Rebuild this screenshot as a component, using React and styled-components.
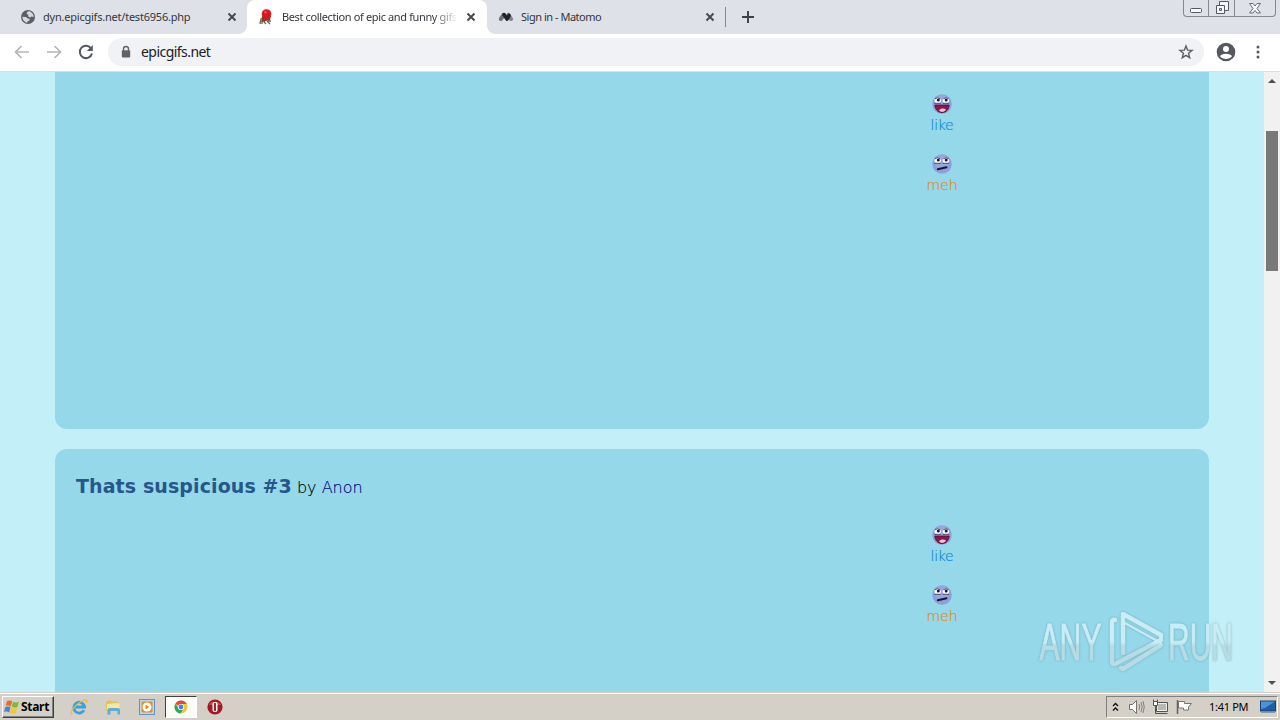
import React from 'react';
import styled, { createGlobalStyle } from 'styled-components';

const GlobalStyle = createGlobalStyle`
  * {
    box-sizing: border-box;
  }

  body {
    margin: 0;
    overflow: hidden;
    font-family: 'Noto Sans', 'Open Sans', sans-serif;
  }

  svg {
    display: block;
    flex: none;
  }
`;

const Screen = styled.div`
  position: relative;
  display: flex;
  flex-direction: column;
  width: 1280px;
  height: 720px;
  overflow: hidden;
  background: #fff;
`;

const TabStrip = styled.div`
  display: flex;
  height: 34px;
  background: #dee1e8;
`;

const Tab = styled.div`
  position: relative;
  display: flex;
  align-items: center;
  width: ${({ width }) => width}px;
  height: 34px;
  padding: 0 ${({ end }) => end || 9}px 0 ${({ inset }) => inset}px;
  border-radius: 8px 8px 0 0;
  background: ${({ active }) => (active ? '#fff' : 'transparent')};

  ${({ active }) =>
    active &&
    `&::before,
  &::after {
    content: '';
    position: absolute;
    bottom: 0;
    width: 8px;
    height: 8px;
  }
  &::before {
    left: -8px;
    background: radial-gradient(circle at 0 0, transparent 7.5px, #fff 8px);
  }
  &::after {
    right: -8px;
    background: radial-gradient(circle at 100% 0, transparent 7.5px, #fff 8px);
  }`}
`;

const TabTitle = styled.span`
  flex: 1;
  margin: 0 6px 0 ${({ gap }) => gap || 7}px;
  overflow: hidden;
  white-space: nowrap;
  color: #34373b;
  font-size: 11px;
  line-height: 16px;
  letter-spacing: ${({ spacing }) => spacing || 0}px;
  ${({ fade }) =>
    fade && 'mask-image: linear-gradient(90deg, #000 86%, transparent);'}
`;

const NewTab = styled.div`
  display: flex;
  align-items: center;
  gap: 15px;
  height: 34px;
  margin-left: -1px;
`;

const Divider = styled.span`
  width: 1px;
  height: 20px;
  background: #85888d;
`;

const WindowButtons = styled.div`
  display: flex;
  height: 17px;
  margin: 0 4px 0 auto;
  border: 1px solid #84888f;
  border-top: 0;
  border-radius: 0 0 4px 4px;
`;

const WindowButton = styled.span`
  display: flex;
  align-items: center;
  justify-content: center;
  width: ${({ width }) => width}px;

  & + & {
    border-left: 1px solid #84888f;
  }
`;

const Toolbar = styled.div`
  display: flex;
  align-items: center;
  height: 38px;
  padding: 0 13px 1px;
  border-bottom: 1px solid #dcdfe3;
  background: #fff;
`;

const NavButtons = styled.div`
  display: flex;
  gap: 14px;
`;

const AddressBar = styled.div`
  display: flex;
  align-items: center;
  width: 1096px;
  height: 28px;
  margin: 0 12px 0 13px;
  padding: 0 9px 0 11px;
  border-radius: 14px;
  background: #f0f2f5;
`;

const Url = styled.span`
  flex: 1;
  margin-left: 8px;
  color: #202124;
  font-size: 14px;
  line-height: 20px;
  letter-spacing: -0.55px;
`;

const ToolbarActions = styled.div`
  display: flex;
  align-items: center;
  gap: 20px;
`;

const Viewport = styled.div`
  display: flex;
  height: 620px;
  overflow: hidden;
`;

const Page = styled.main`
  display: flex;
  flex-direction: column;
  gap: 20px;
  width: 1264px;
  height: 620px;
  padding: 0 55px;
  overflow: hidden;
  background: #c3eff8;
`;

const Post = styled.article`
  flex: none;
  height: 411px;
  padding: 24px 21px 0;
  border-radius: 12px;
  background: #94d8ea;
  font-family: 'DejaVu Sans', Verdana, sans-serif;

  &:first-child {
    margin-top: -54px;
  }
`;

const PostHeader = styled.header`
  display: flex;
  align-items: baseline;
  height: 52px;
  white-space: nowrap;
`;

const PostTitle = styled.h2`
  margin: 0 5px 0 0;
  color: #27568a;
  font-family: 'DejaVu Sans', Verdana, sans-serif;
  font-size: 19px;
  line-height: 26px;
  letter-spacing: 0.1px;
`;

const Byline = styled.span`
  color: #000;
  font-family: 'DejaVu Sans Light', 'DejaVu Sans', sans-serif;
  font-weight: 200;
  font-size: 16px;
  -webkit-text-stroke: 0.15px;
`;

const Author = styled.span`
  color: #000b80;
`;

const Votes = styled.div`
  display: flex;
  flex-direction: column;
  align-items: center;
  gap: 20px;
  width: 60px;
  margin-left: 836px;
`;

const Vote = styled.div`
  display: flex;
  flex-direction: column;
  align-items: center;
  height: 40px;
  color: ${({ color }) => color};
  font-size: 14px;
  line-height: 23px;
  font-family: 'DejaVu Sans Light', 'DejaVu Sans', sans-serif;
  letter-spacing: ${({ spacing }) => spacing || 0}px;
  -webkit-text-stroke: 0.2px;
`;

const Scrollbar = styled.div`
  display: flex;
  flex-direction: column;
  align-items: center;
  width: 16px;
  padding: 7px 0;
  background: #f1f1f1;
`;

const Thumb = styled.div`
  width: 12px;
  height: 140px;
  margin: 48px 0 auto;
  background: #787878;
`;

const Arrow = styled.span`
  border: 4px solid transparent;
  ${({ up }) =>
    up
      ? 'border-top: 0; border-bottom: 4px solid #505050;'
      : 'border-bottom: 0; border-top: 4px solid #505050;'}
`;

const Taskbar = styled.footer`
  display: flex;
  align-items: center;
  height: 28px;
  padding: 3px 2px 2px;
  border-top: 1px solid #d4d0c8;
  box-shadow: inset 0 1px #fff;
  background: #d4cfc7;
`;

const StartButton = styled.div`
  display: flex;
  align-items: center;
  gap: 1px;
  width: 52px;
  height: 22px;
  padding-left: 1px;
  border: 1px solid;
  border-color: #fff #404040 #404040 #fff;
  box-shadow: inset -1px -1px #808080;
  color: #000;
  font-size: 12px;
  font-weight: 700;
  line-height: 16px;
  letter-spacing: -0.3px;
`;

const Launchers = styled.div`
  display: flex;
  align-items: center;
  margin-left: 8px;
`;

const Launcher = styled.div`
  display: flex;
  align-items: center;
  justify-content: center;
  width: 34px;
  height: 22px;
  ${({ pressed }) =>
    pressed &&
    `width: 32px;
  margin: 0 1px;
  border: 1px solid;
  border-color: #404040 #fff #fff #404040;
  background: #fbfbfa;`}
`;

const Tray = styled.div`
  display: flex;
  align-items: center;
  width: 172px;
  height: 22px;
  margin-left: auto;
  padding-left: 5px;
  border: 1px solid;
  border-color: #808080 #fff #fff #808080;
`;

const Clock = styled.span`
  width: 42px;
  margin: 0 9px 0 16px;
  color: #000;
  font-size: 11px;
  line-height: 16px;
  white-space: nowrap;
  letter-spacing: -0.3px;
`;

const TrayIcons = styled.div`
  display: flex;
  align-items: center;
  gap: 7px;
`;

const Watermark = styled.svg`
  position: absolute;
  left: 1030px;
  top: 602px;
  filter: drop-shadow(0 0 1px rgba(80, 120, 135, 0.5));
`;

function CloseIcon() {
  return (
    <svg width="14" height="14" viewBox="0 0 14 14">
      <path d="M3.5 3.5l7 7m0-7l-7 7" stroke="#45484c" strokeWidth="1.9" />
    </svg>
  );
}

function GlobeIcon() {
  return (
    <svg width="14" height="14" viewBox="0 0 14 14">
      <circle cx="7" cy="7" r="7" fill="#5b5f65" />
      <path d="M6.500 1.500L9 1.300l3 2.700.8 3-2.300-.4-1.500.8-2-1.200.5-1.500-2-.8z" fill="#d5d8de" />
      <path d="M1.200 6.800l3.500.2 2.300 1.400 1.800.5-.6 1.800-1.700.7-.4 1.400-2-.8L2 9.800z" fill="#d5d8de" />
    </svg>
  );
}

function SquidIcon() {
  return (
    <svg width="14" height="17" viewBox="0 0 14 17">
      <path
        d="M5 8L2 10l-1 5m5-6l-3 3v3m4-5l-2 3 2 2m1-6l2 3 2 0m-4 0l3 3"
        fill="none"
        stroke="#5c6b57"
        strokeWidth="1.3"
      />
      <path d="M3 7l4 1 5-1-1 4-4 1-4 1z" fill="#8c3a35" />
      <circle cx="7.500" cy="5" r="4.800" fill="#dc1719" />
      <circle cx="6.500" cy="3.300" r="1.200" fill="#ee5a5b" />
    </svg>
  );
}

function MatomoIcon() {
  return (
    <svg width="16" height="10" viewBox="0 0 16 10">
      <path d="M2.800 7l2.800-4" stroke="#6f7378" strokeWidth="4" strokeLinecap="round" />
      <path d="M10.500 2.800l2.500 4.200" stroke="#808489" strokeWidth="4" strokeLinecap="round" />
      <path
        d="M6 2.600l3 4.400 2-3.500"
        fill="none"
        stroke="#202226"
        strokeWidth="3.600"
        strokeLinejoin="round"
        strokeLinecap="round"
      />
    </svg>
  );
}

function NavArrow({ forward }) {
  return (
    <svg width="18" height="18" viewBox="0 0 18 18">
      <path
        d={forward ? 'M2 9h13M9.500 3l6 6-6 6' : 'M16 9H3M8.500 3l-6 6 6 6'}
        fill="none"
        stroke="#b3b5b8"
        strokeWidth="1.700"
      />
    </svg>
  );
}

function ReloadIcon() {
  return (
    <svg width="18" height="18" viewBox="0 0 18 18">
      <path d="M14.200 5.500A6.200 6.200 0 1 0 15 10.500" fill="none" stroke="#55585d" strokeWidth="2" />
      <path d="M15.800 2v6h-6z" fill="#55585d" />
    </svg>
  );
}

function LockIcon() {
  return (
    <svg width="14" height="14" viewBox="0 0 14 14">
      <path d="M4.500 6V4a2.500 2.500 0 0 1 5 0v2" fill="none" stroke="#5f6368" strokeWidth="1.400" />
      <rect x="2.800" y="5.300" width="8.400" height="7.200" rx="1" fill="#5f6368" />
    </svg>
  );
}

function StarIcon() {
  return (
    <svg width="18" height="18" viewBox="0 0 18 18">
      <path
        d="M9 3l1.600 4.100 4.500.3-3.500 2.900 1.100 4.400L9 12.300 5.300 14.700l1.100-4.400-3.500-2.900 4.500-.3z"
        fill="none"
        stroke="#5a5d62"
        strokeWidth="1.400"
      />
    </svg>
  );
}

function ProfileIcon() {
  return (
    <svg width="20" height="20" viewBox="0 0 20 20">
      <circle cx="10" cy="10" r="9.300" fill="#55585e" />
      <circle cx="10" cy="7" r="3" fill="#fff" />
      <path d="M4 14.200c1.200-3.400 10.800-3.400 12 0-2.800 3.700-9.200 3.700-12 0z" fill="#fff" />
    </svg>
  );
}

function MenuIcon() {
  return (
    <svg width="4" height="16" viewBox="0 0 4 16">
      <circle cx="2" cy="3" r="1.500" fill="#55585e" />
      <circle cx="2" cy="8" r="1.500" fill="#55585e" />
      <circle cx="2" cy="13" r="1.500" fill="#55585e" />
    </svg>
  );
}

function FaceIcon({ happy }) {
  return (
    <svg width="20" height="20" viewBox="0 0 20 20">
      <circle cx="10" cy="10" r="9.800" fill="#8f9fdb" />
      <circle cx="10" cy="8" r="7" fill="#9dabe1" opacity=".6" />
      <ellipse cx="5.700" cy="6.600" rx="3.200" ry="3.100" fill="#fff" />
      <ellipse cx="13.900" cy="6.600" rx="3.200" ry="3.100" fill="#fff" />
      <path
        d="M2.500 9.300h6.200m2.200 0h6.200M3 4.800Q5.500 2.600 8.300 4.800m3 0q3-2.200 5.300 0"
        fill="none"
        stroke="#34375a"
        strokeWidth=".9"
      />
      <circle cx="6.300" cy="6" r="1.500" fill="#171a2c" />
      <circle cx="14.200" cy="6" r="1.500" fill="#171a2c" />
      {happy ? (
        <>
          <path
            d="M2.800 11h14.400c-.5 4.600-3.200 7.600-7.200 7.600S3.300 15.600 2.800 11z"
            fill="#8c1746"
            stroke="#42102e"
            strokeWidth=".8"
          />
          <path d="M7 16.200c2-2.400 5-2.200 7-.6-1.400 2.600-5.200 3.300-7 .6z" fill="#f3c2d3" />
        </>
      ) : (
        <path d="M5.800 15.300l8.700-2.100" stroke="#171a2c" strokeWidth="2" strokeLinecap="round" />
      )}
    </svg>
  );
}

function WindowsLogo() {
  return (
    <svg width="16" height="16" viewBox="0 0 16 16">
      <path d="M3 2c2-1 3.500-.7 5.200.3L6.800 7.500C5.200 6.500 3.500 6.300 1.600 7z" fill="#ee6a2b" />
      <path d="M9 2.800c2 1 3.800 1 6 0L13.500 8c-2 .9-3.800.8-5.800-.2z" fill="#7cb93c" />
      <path d="M1.300 8c2-1 3.600-.7 5.200.3L5.200 13.500C3.500 12.500 2 12.300 0 13z" fill="#3f86d5" />
      <path d="M7.300 8.800c2 1 3.900 1 5.900.1L11.800 14c-2 1-3.900.8-5.900-.2z" fill="#f6c72c" />
    </svg>
  );
}

function ExplorerIcon() {
  return (
    <svg width="18" height="18" viewBox="0 0 18 18">
      <path d="M14 12.200A5.400 5.400 0 1 1 14.600 9H5" fill="none" stroke="#3aa0dc" strokeWidth="2.800" />
      <path d="M2 16.500C-1 14.500 5 7 11.500 3.200 15 1.300 17.700 1.400 16.500 5" fill="none" stroke="#e9bd3a" strokeWidth="1.300" />
    </svg>
  );
}

function FolderIcon() {
  return (
    <svg width="18" height="18" viewBox="0 0 18 18">
      <path d="M2 3.500L6 2l2 1.500 5-.5 2 2v8H2z" fill="#e3c15c" />
      <path d="M3 6l11-1 1.500 1v6H3z" fill="#f7e7a3" />
      <path d="M3.500 16.500V12q0-2 2-2H14q2 0 2 2v4.500h-2.500v-3.500h-7v3.500z" fill="#5baed6" />
    </svg>
  );
}

function PlayerIcon() {
  return (
    <svg width="16" height="16" viewBox="0 0 16 16">
      <rect x=".5" y=".5" width="15" height="15" fill="#b7d9ef" stroke="#5b96c9" />
      <rect x="2.500" y="2.500" width="11" height="11" rx="1" fill="#f08a1d" />
      <circle cx="8" cy="8" r="4.500" fill="#fff" />
      <path d="M6.500 5.500l4 2.500-4 2.500z" fill="#f08a1d" />
    </svg>
  );
}

function ChromeIcon() {
  return (
    <svg width="14" height="14" viewBox="0 0 14 14">
      <circle cx="7" cy="7" r="6.500" fill="#f4c631" />
      <path d="M7 7L1.400 3.700A6.500 6.500 0 0 1 12.700 4H7z" fill="#dd4b3e" />
      <path d="M1.400 3.700A6.500 6.500 0 0 0 6.500 13.500L9.700 8.500 4.400 8.600z" fill="#35a35a" />
      <circle cx="7" cy="7" r="3.100" fill="#fff" />
      <circle cx="7" cy="7" r="2.400" fill="#4285e8" />
    </svg>
  );
}

function OperaIcon() {
  return (
    <svg width="16" height="16" viewBox="0 0 16 16">
      <circle cx="8" cy="8" r="7.600" fill="#a71720" />
      <path d="M2 6a6.400 5 0 0 1 12 0z" fill="#cf4a50" />
      <rect x="5.500" y="3" width="5" height="10" rx="2" fill="#fff" />
      <rect x="7.100" y="3.800" width="1.800" height="8.400" rx=".8" fill="#8a0f18" />
    </svg>
  );
}

function AnyRunMark() {
  return (
    <Watermark width="220" height="80" viewBox="0 0 220 80">
      <defs>
        <linearGradient id="mark" x1="0" y1="8" x2="0" y2="72" gradientUnits="userSpaceOnUse">
          <stop offset="50%" stopColor="#c8edf7" />
          <stop offset="56%" stopColor="#b6dce6" />
        </linearGradient>
      </defs>
      <g
        fill="url(#mark)"
        stroke="url(#mark)"
        strokeWidth="1"
        fontFamily="'Liberation Sans Narrow', 'Liberation Sans', sans-serif"
        fontSize="51"
      >
        <text x="9.500" y="58" textLength="62" lengthAdjust="spacingAndGlyphs">
          ANY
        </text>
        <text x="138" y="58" textLength="65" lengthAdjust="spacingAndGlyphs">
          RUN
        </text>
      </g>
      <g fill="none" stroke="url(#mark)" strokeWidth="4.500" strokeLinejoin="round" strokeLinecap="round">
        <path d="M93 51V12l38 21v2" />
        <path d="M85 18q-3-1-3 2v40q0 3 3 2l46-24" />
        <path d="M131 43L93 67l-2-1" />
        <path d="M93 20l38 21" strokeWidth="2" />
      </g>
    </Watermark>
  );
}

function PostCard({ title, author }) {
  return (
    <Post>
      <PostHeader>
        {title && (
          <>
            <PostTitle>{title}</PostTitle>
            <Byline>
              by <Author>{author}</Author>
            </Byline>
          </>
        )}
      </PostHeader>
      <Votes>
        <Vote color="#0f86d2" spacing={-0.3}>
          <FaceIcon happy />
          like
        </Vote>
        <Vote color="#e0881c">
          <FaceIcon />
          meh
        </Vote>
      </Votes>
    </Post>
  );
}

function App() {
  return (
    <Screen>
      <GlobalStyle />
      <TabStrip>
        <Tab width={247} inset={21} end={8}>
          <GlobeIcon />
          <TabTitle gap={8} spacing={-0.22}>
            dyn.epicgifs.net/test6956.php
          </TabTitle>
          <CloseIcon />
        </Tab>
        <Tab width={240} inset={12} active>
          <SquidIcon />
          <TabTitle gap={9} spacing={-0.37} fade>
            Best collection of epic and funny gifs
          </TabTitle>
          <CloseIcon />
        </Tab>
        <Tab width={239} inset={11}>
          <MatomoIcon />
          <TabTitle spacing={-0.48}>Sign in - Matomo</TabTitle>
          <CloseIcon />
        </Tab>
        <NewTab>
          <Divider />
          <svg width="14" height="14" viewBox="0 0 14 14">
            <path d="M7 1v12M1 7h12" stroke="#3c4043" strokeWidth="1.900" />
          </svg>
        </NewTab>
        <WindowButtons>
          <WindowButton width={24}>
            <svg width="14" height="14" viewBox="0 0 14 14">
              <rect x="1.500" y="7.500" width="11" height="4" rx="1" fill="#f7f8fa" stroke="#555a62" />
            </svg>
          </WindowButton>
          <WindowButton width={26}>
            <svg width="14" height="14" viewBox="0 0 14 14">
              <path d="M4.500.5h9v9h-9z" fill="#f7f8fa" stroke="#555a62" />
              <path d="M1.500 4.500h8v8h-8z" fill="#f7f8fa" stroke="#555a62" />
              <path d="M4.500 7.500h2v2h-2z" fill="#dee1e8" stroke="#555a62" />
            </svg>
          </WindowButton>
          <WindowButton width={41}>
            <svg width="14" height="14" viewBox="0 0 14 14">
              <path
                d="M1.500 2.500h3.500l2 2.500 2-2.500h3.500L9 7.500l3.500 4.500H9l-2-2.500L5 12H1.500L5 7.500z"
                fill="#f7f8fa"
                stroke="#6a6e76"
              />
            </svg>
          </WindowButton>
        </WindowButtons>
      </TabStrip>
      <Toolbar>
        <NavButtons>
          <NavArrow />
          <NavArrow forward />
          <ReloadIcon />
        </NavButtons>
        <AddressBar>
          <LockIcon />
          <Url>epicgifs.net</Url>
          <StarIcon />
        </AddressBar>
        <ToolbarActions>
          <ProfileIcon />
          <MenuIcon />
        </ToolbarActions>
      </Toolbar>
      <Viewport>
        <Page>
          <PostCard />
          <PostCard title="Thats suspicious #3" author="Anon" />
        </Page>
        <Scrollbar>
          <Arrow up />
          <Thumb />
          <Arrow />
        </Scrollbar>
      </Viewport>
      <Taskbar>
        <StartButton>
          <WindowsLogo />
          Start
        </StartButton>
        <Launchers>
          <Launcher>
            <ExplorerIcon />
          </Launcher>
          <Launcher>
            <FolderIcon />
          </Launcher>
          <Launcher>
            <PlayerIcon />
          </Launcher>
          <Launcher pressed>
            <ChromeIcon />
          </Launcher>
          <Launcher>
            <OperaIcon />
          </Launcher>
        </Launchers>
        <Tray>
          <TrayIcons>
            <svg width="7" height="12" viewBox="0 0 7 12">
              <path d="M1 5l2.500-2.500L6 5M1 9.500L3.500 7 6 9.500" fill="none" stroke="#111" strokeWidth="1.400" />
            </svg>
            <svg width="19" height="16" viewBox="0 0 19 16">
              <path d="M3.500 5.500h3l4-4v13l-4-4h-3z" fill="#fff" stroke="#74716c" />
              <path d="M13 5q1.500 3 0 6m2-8q2.500 5 0 10m2-11q2.500 6 0 12" fill="none" stroke="#85827d" />
            </svg>
            <svg width="17" height="16" viewBox="0 0 17 16">
              <path d="M4.500 3.500h11v9h-11z" fill="#bab8b3" stroke="#55534f" />
              <path d="M5.500 4.500h9v7h-9z" fill="none" stroke="#eee" />
              <path d="M1.500 2.500h4v4h-4zM1.500.5v2m4-2v2" fill="#fff" stroke="#55534f" />
              <path d="M3.500 7v7.500h12" fill="none" stroke="#55534f" />
            </svg>
            <svg width="17" height="16" viewBox="0 0 17 16">
              <path d="M2.500 2.500h6v2h7l-3 3.500v3h-5v-2h-5z" fill="#fff" stroke="#77746f" />
              <path d="M1.500 1v14" stroke="#66635e" strokeWidth="1.500" />
            </svg>
          </TrayIcons>
          <Clock>1:41 PM</Clock>
          <svg width="16" height="16" viewBox="0 0 16 16">
            <rect x=".5" y="2" width="15" height="10" fill="#205da7" stroke="#164477" />
            <path d="M1 2.500h14L5 9l-4 1z" fill="#4b91d3" />
            <path d="M1 13.500h14" stroke="#8c99a5" />
          </svg>
        </Tray>
      </Taskbar>
      <AnyRunMark />
    </Screen>
  );
}

export default App;
